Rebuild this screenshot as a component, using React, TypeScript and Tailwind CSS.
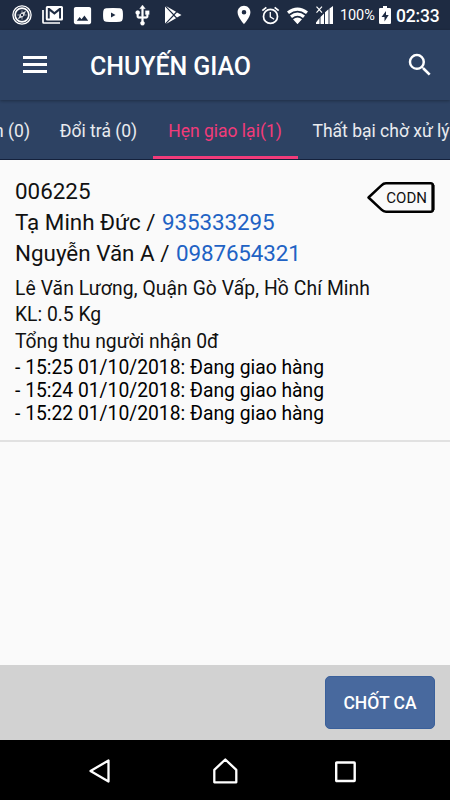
import type { ReactNode } from "react";

interface IconProps {
    className: string;
    viewBox?: string;
    children: ReactNode;
}

function Icon({ className, viewBox = "0 0 24 24", children }: Readonly<IconProps>) {
    return (
        <svg className={`shrink-0 ${className}`} viewBox={viewBox} fill="currentColor" aria-hidden="true">
            {children}
        </svg>
    );
}

function StatusBar() {
    return (
        <div className="flex h-[30px] items-center bg-[#1e2b42] pl-3 pr-[10px] text-white">
            {/* Notifications */}
            <Icon className="h-5 w-5" viewBox="0 0 20 20">
                <circle cx="10" cy="10" r="9.1" fill="none" stroke="currentColor" strokeWidth="1.3" />
                <circle cx="10" cy="10" r="6.9" fill="none" stroke="currentColor" strokeWidth="1.7" />
                <path d="M10 3.5 11 9l5.5 1-5.5 1-1 5.5L9 11l-5.5-1L9 9z" opacity=".5" />
                <path d="m14.2 5.8-2.8 5.6-5.600 2.800 2.800-5.600z" opacity=".85" />
                <circle cx="10" cy="10" r="1.2" fill="#1e2b42" />
            </Icon>
            <Icon className="ml-[10px] h-[18px] w-[21px]" viewBox="0 0 21 18">
                <path d="M1 4v12.2q0 .8.8.8H18" fill="none" stroke="currentColor" strokeWidth="1.7" />
                <path fillRule="evenodd" d="M5.3 0h14.2Q21 0 21 1.500V13q0 1.500-1.500 1.500H5.300Q3.800 14.500 3.800 13V1.500Q3.800 0 5.300 0M5.800 2v10.500h1.900V4.900l4.700 3.900 4.700-3.900v7.600H19V2h-1.700l-4.900 4-4.900-4z" />
            </Icon>
            <Icon className="ml-2 h-[23px] w-[23px]">
                <path d="M21 19V5c0-1.100-.9-2-2-2H5c-1.100 0-2 .9-2 2v14c0 1.100.9 2 2 2h14c1.100 0 2-.9 2-2M9 13.500l2 2.500 3-4 4 5.500H6z" />
            </Icon>
            <Icon className="ml-[9px] h-[14px] w-5" viewBox="0 0 20 14">
                <path fillRule="evenodd" d="M3 .3Q10-.3 17 .3q2.500.2 2.700 2.700.5 4 0 8-.2 2.500-2.700 2.700-7 .6-14 0Q.5 13.500.3 11q-.5-4 0-8Q.5.5 3 .3M8 4.500v5L12.500 7z" />
            </Icon>
            <Icon className="ml-2 h-[23px] w-[23px]">
                <path d="M15 7v4h1v2h-3V5h2l-3-4-3 4h2v8H8v-2.070c.7-.37 1.200-1.080 1.200-1.930 0-1.210-.99-2.200-2.200-2.200S4.800 7.790 4.800 9c0 .85.5 1.560 1.200 1.930V13c0 1.110.89 2 2 2h3v3.050c-.71.37-1.200 1.100-1.200 1.950 0 1.220.99 2.200 2.200 2.200s2.200-.98 2.200-2.200c0-.85-.49-1.580-1.200-1.950V15h3c1.110 0 2-.89 2-2v-2h1V7z" stroke="currentColor" strokeWidth=".3" />
            </Icon>
            <Icon className="ml-[11px] h-[18px] w-[17px]" viewBox="0 0 17 18">
                <path d="M0 .4v17.200L8 9zM1 0l7.800 8.100L11 5.800zM1 18l7.800-8.100 2.200 2.300zM12 6.400 9.600 9l2.400 2.600L16.500 9z" />
            </Icon>

            {/* System */}
            <Icon className="ml-auto h-[22px] w-[22px]">
                <path d="M12 2C8.130 2 5 5.130 5 9c0 5.250 7 13 7 13s7-7.750 7-13c0-3.870-3.130-7-7-7m0 9.500a2.500 2.500 0 1 1 0-5 2.500 2.500 0 0 1 0 5" />
            </Icon>
            <Icon className="ml-[5px] h-[21px] w-[21px]">
                <path d="m22 5.720-4.600-3.860-1.290 1.530 4.600 3.860zM7.880 3.390 6.600 1.860 2 5.710l1.290 1.530zM12.500 8H11v6l4.750 2.850.75-1.230-4-2.370zM12 4a9 9 0 1 0 0 18 9 9 0 0 0 0-18m0 16a7 7 0 1 1 0-14 7 7 0 0 1 0 14" />
            </Icon>
            <Icon className="ml-[6px] h-[17px] w-[21px]" viewBox="0 0 21 17">
                <path d="m0 4.600 2 2.500q8.500-6.600 17 0l2-2.500Q10.500-3.500 0 4.600M3 8.500l2 2.400q5.500-4.200 11 0l2-2.400q-7.500-6-15 0M6 12.200l4.500 5 4.500-5q-4.500-3.500-9 0" />
            </Icon>
            <Icon className="ml-2 h-[18px] w-[17px]" viewBox="0 0 17 18">
                <path d="M13.500 2.500 17 0v18h-3.500zM9 6.300l3.500-3V18H9zM4.500 11 8 7.400V18H4.500zM0 18v-1.500L3.500 12v6z" />
                <path d="m.5.700 5.500 6M6 .7l-5.500 6" fill="none" stroke="currentColor" strokeWidth="1.200" />
            </Icon>
            <span className="ml-[7px] w-9 pt-[3px] text-[14.500px] leading-none tracking-[-0.1px] whitespace-nowrap">100%</span>
            <Icon className="ml-[3px] h-[18px] w-3" viewBox="0 0 12 18">
                <path fillRule="evenodd" d="M4 0h4v2h2.500Q12 2 12 3.300v13.400q0 1.300-1.300 1.300H1.300Q0 18 0 16.700V3.300Q0 2 1.300 2H4zM7 5l-4.500 6h3v4.500l4.200-6.500H7z" />
            </Icon>
            <span className="ml-[5px] w-11 pt-[3px] text-[17.500px] font-medium leading-none tracking-[-0.15px] whitespace-nowrap">02:33</span>
        </div>
    );
}

function AppBar() {
    return (
        <header className="relative z-10 flex h-[70px] items-center bg-[#2d4263] px-[23px] text-white shadow-[0_1px_3px_rgba(0,0,0,0.3)]">
            <button aria-label="Menu" className="flex w-6 flex-col gap-[4.500px] pb-[1px]">
                <span className="h-[2.700px] w-full bg-white" />
                <span className="h-[2.700px] w-full bg-white" />
                <span className="h-[2.700px] w-full bg-white" />
            </button>
            <h1 className="ml-[43px] pt-[3px] text-[25px] font-medium leading-none tracking-[-0.07px]">CHUYẾN GIAO</h1>
            <button aria-label="Tìm kiếm" className="ml-auto -mr-[8px]">
                <Icon className="h-[30px] w-[30px]">
                    <path d="M15.500 14h-.79l-.28-.27A6.471 6.471 0 0 0 16 9.500 6.500 6.500 0 1 0 9.500 16c1.610 0 3.090-.59 4.230-1.570l.27.28v.79l5 4.990L20.490 19zm-6 0C7.010 14 5 11.990 5 9.500S7.010 5 9.500 5 14 7.010 14 9.500 11.990 14 9.500 14" />
                </Icon>
            </button>
        </header>
    );
}

function Tabs() {
    return (
        <nav className="flex h-[60px] justify-start overflow-hidden border-b border-[#14213c] bg-[#2d4263] text-[17.500px] whitespace-nowrap text-white/90">
            <div className="flex w-[45px] shrink-0 items-center justify-end pr-[15px] pt-[3px]">n (0)</div>
            <div className="flex w-[108px] shrink-0 items-center justify-center pt-[3px] pr-px">Đổi trả (0)</div>
            <div className="flex w-[145px] shrink-0 items-center justify-center border-b-[3px] border-[#f23b7a] pt-[6px] pr-px text-[#f23b7a]">
                Hẹn giao lại(1)
            </div>
            <div className="flex shrink-0 items-center pl-[14.500px] pt-[3px]">Thất bại chờ xử lý</div>
        </nav>
    );
}

const CONTACTS = [
    { name: "Tạ Minh Đức", phone: "935333295" },
    { name: "Nguyễn Văn A", phone: "0987654321" },
];

const HISTORY = [
    "15:25 01/10/2018: Đang giao hàng",
    "15:24 01/10/2018: Đang giao hàng",
    "15:22 01/10/2018: Đang giao hàng",
];

function OrderCard() {
    return (
        <article className="flex h-[282px] justify-between border-b-2 border-[#e1e1e1] px-[15px] pt-4 text-[#111]">
            <div className="whitespace-nowrap">
                <div className="text-[22.400px] leading-[31px]">
                    <p>006225</p>
                    {CONTACTS.map((contact) => (
                        <p key={contact.phone}>
                            {contact.name} /{" "}
                            <a className="ml-px tracking-[-0.1px] text-[#2162c4]">{contact.phone}</a>
                        </p>
                    ))}
                </div>
                <div className="mt-[7px] text-[19.300px] leading-[26.300px]">
                    <p className="tracking-[0.09px]">Lê Văn Lương, Quận Gò Vấp, Hồ Chí Minh</p>
                    <p>KL: 0.5 Kg</p>
                    <p>Tổng thu người nhận 0đ</p>
                </div>
                <div className="mt-px text-[19.300px] leading-[23.300px] text-black">
                    {HISTORY.map((entry) => (
                        <p key={entry}>- {entry}</p>
                    ))}
                </div>
            </div>

            {/* Service tag */}
            <div className="relative -ml-4 mt-[6px] flex h-[31px] w-[68px] shrink-0 items-center justify-end pr-2">
                <svg className="absolute inset-0 h-full w-full" viewBox="0 0 68 31" fill="none">
                    <path
                        d="M1.500 15.500 14.500 3.400Q16.500 1.300 19 1.300h44.500q2.500 0 2.500 2.500v23.400q0 2.500-2.500 2.500H19q-2.500 0-4.500-2z"
                        stroke="black"
                        strokeWidth="2.500"
                        strokeLinejoin="round"
                    />
                    <path d="M66 3v25" stroke="black" strokeWidth="3" />
                </svg>
                <span className="relative pt-[2px] text-[15px] leading-none">CODN</span>
            </div>
        </article>
    );
}

function NavigationBar() {
    return (
        <div className="flex h-[60px] items-center bg-black pl-[88px] text-white">
            <Icon className="h-[26px] w-6" viewBox="0 0 24 26">
                <path d="M20.500 3v21L2.500 13.500z" transform="translate(0 .5)" fill="none" stroke="currentColor" strokeWidth="2.300" strokeLinejoin="round" />
            </Icon>
            <Icon className="ml-[100px] mt-[2px] h-[26px] w-[26px]" viewBox="0 0 26 26">
                <path d="M2.300 24.300V11.800L13.300 1.500l11 10.300v12.500z" fill="none" stroke="currentColor" strokeWidth="2.300" strokeLinejoin="round" />
            </Icon>
            <Icon className="ml-[96px] mt-[3px] h-[22px] w-[22px]" viewBox="0 0 22 22">
                <rect x="2.200" y="1.500" width="18.500" height="18.500" rx=".5" fill="none" stroke="currentColor" strokeWidth="2.400" />
            </Icon>
        </div>
    );
}

export default function App() {
    return (
        <div className="flex h-[800px] w-[450px] flex-col overflow-hidden bg-[#fafafa] font-['Roboto',sans-serif]">
            <StatusBar />
            <AppBar />
            <Tabs />
            <main className="flex-1">
                <OrderCard />
            </main>
            <footer className="flex h-[75px] items-center justify-end bg-[#d2d2d2] px-[15px]">
                <button className="h-[53px] w-[110px] rounded-[5px] border border-[#3a609b] bg-[#48699e] pt-[2px] text-[17.500px] font-medium text-white">
                    CHỐT CA
                </button>
            </footer>
            <NavigationBar />
        </div>
    );
}
